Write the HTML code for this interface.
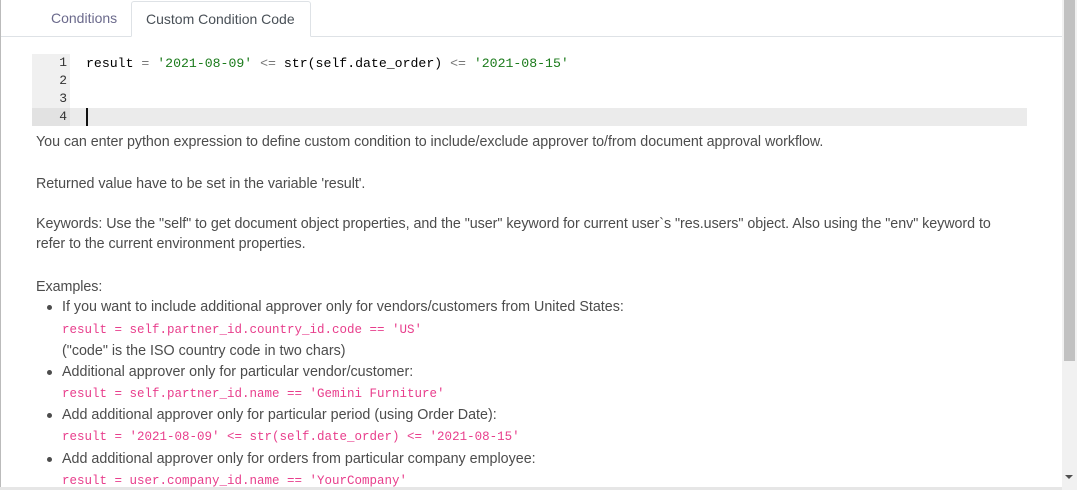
<!DOCTYPE html>
<html><head><meta charset="utf-8"><style>
*{margin:0;padding:0;box-sizing:border-box}
html,body{width:1077px;height:490px;overflow:hidden;background:#fff}
body{position:relative;font-family:"Liberation Sans",sans-serif;font-size:14.3px;color:#4c4c4c}
.lb{position:absolute;left:0;top:0;width:1px;height:490px;background:#bbb}
.tabline{position:absolute;left:1px;top:36px;width:1061px;height:1px;background:#dee2e6}
.tab1{position:absolute;left:51px;top:10px;color:#6b6a8c;font-size:14px}
.tab2{position:absolute;left:131px;top:1px;width:180px;height:36px;border:1px solid #dee2e6;border-bottom:1px solid #fff;border-radius:3px 3px 0 0;background:#fff;padding:9px 0 0 14px;color:#495057;font-size:14px}
.gut{position:absolute;left:32px;top:54px;width:38px;height:72px;background:#f0f0f0}
.act{position:absolute;left:70px;top:108px;width:957px;height:18px;background:#ebebeb}
.actg{position:absolute;left:32px;top:108px;width:38px;height:18px;background:#e2e2e2}
.ln{position:absolute;left:32px;width:35px;text-align:right;font-family:"Liberation Mono",monospace;font-size:13px;color:#333;line-height:18px}
.code{position:absolute;left:86px;top:55px;font-family:"Liberation Mono",monospace;font-size:13.2px;line-height:18px;color:#000;white-space:pre}
.s{color:#1a7a1a}.o{color:#777}
.cur{position:absolute;left:86px;top:108px;width:2px;height:18px;background:#111}
.t{position:absolute;left:36px;white-space:nowrap;line-height:20px;letter-spacing:-0.05px}
.b{position:absolute;left:62px;white-space:nowrap;line-height:20px}
.dot{position:absolute;left:47px;width:5px;height:5px;border-radius:50%;background:#4c4c4c}
.c{position:absolute;left:62px;font-family:"Liberation Mono",monospace;font-size:12.5px;color:#e83e8c;white-space:pre;line-height:16px}
.sb{position:absolute;left:1062px;top:0;width:15px;height:490px;background:#f1f1f1}
.th{position:absolute;left:1064px;top:0;width:11px;height:361px;background:#c1c1c1}
.arr{position:absolute;left:1065px;top:475px;width:0;height:0;border-left:4px solid transparent;border-right:4px solid transparent;border-top:4px solid #505050}
.bot{position:absolute;left:0;top:487px;width:1062px;height:3px;background:#e6e6e6}
</style></head><body>
<div class="lb"></div>
<div class="tabline"></div>
<div class="tab1">Conditions</div>
<div class="tab2">Custom Condition Code</div>
<div class="gut"></div><div class="act"></div><div class="actg"></div>
<div class="ln" style="top:54px">1</div>
<div class="ln" style="top:72px">2</div>
<div class="ln" style="top:90px">3</div>
<div class="ln" style="top:108px">4</div>
<div class="code">result <span class="o">=</span> <span class="s">'2021-08-09'</span> <span class="o">&lt;=</span> str(self.date_order) <span class="o">&lt;=</span> <span class="s">'2021-08-15'</span></div>
<div class="cur"></div>
<div class="t" style="top:132px">You can enter python expression to define custom condition to include/exclude approver to/from document approval workflow.</div>
<div class="t" style="top:174px">Returned value have to be set in the variable 'result'.</div>
<div class="t" style="top:214px">Keywords: Use the "self" to get document object properties, and the "user" keyword for current user`s "res.users" object. Also using the "env" keyword to</div>
<div class="t" style="top:234px">refer to the current environment properties.</div>
<div class="t" style="top:277px">Examples:</div>
<div class="dot" style="top:305px"></div>
<div class="b" style="top:297px">If you want to include additional approver only for vendors/customers from United States:</div>
<div class="c" style="top:322px">result = self.partner_id.country_id.code == 'US'</div>
<div class="b" style="top:341px">("code" is the ISO country code in two chars)</div>
<div class="dot" style="top:370px"></div>
<div class="b" style="top:362px">Additional approver only for particular vendor/customer:</div>
<div class="c" style="top:386px">result = self.partner_id.name == 'Gemini Furniture'</div>
<div class="dot" style="top:413px"></div>
<div class="b" style="top:405px">Add additional approver only for particular period (using Order Date):</div>
<div class="c" style="top:429px">result = '2021-08-09' &lt;= str(self.date_order) &lt;= '2021-08-15'</div>
<div class="dot" style="top:457px"></div>
<div class="b" style="top:449px">Add additional approver only for orders from particular company employee:</div>
<div class="c" style="top:473px">result = user.company_id.name == 'YourCompany'</div>
<div class="bot"></div>
<div class="sb"></div><div class="th"></div><div class="arr"></div>
</body></html>
